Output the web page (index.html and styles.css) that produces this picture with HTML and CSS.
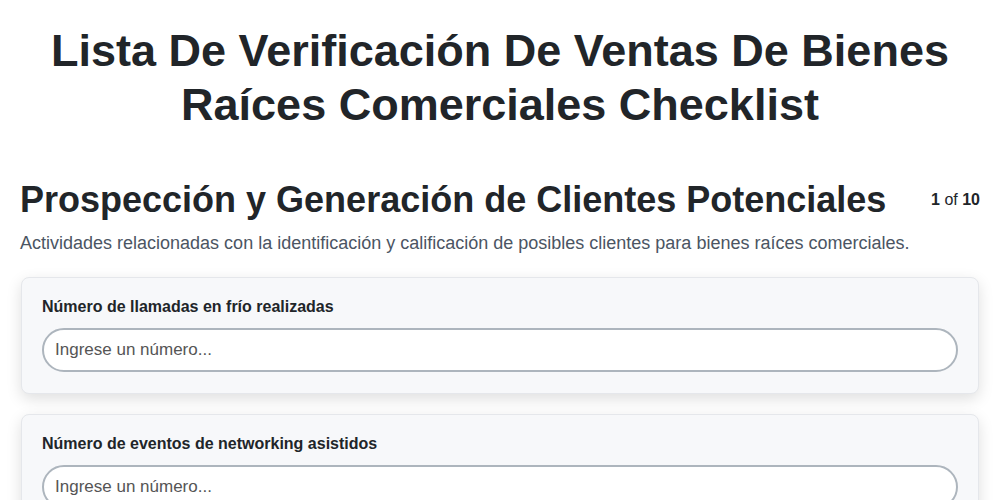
FILE: index.html
```html
<!DOCTYPE html>
<html lang="es">
<head>
<meta charset="utf-8">
<link rel="stylesheet" href="styles.css">
</head>
<body>
<div class="page">
  <h1 class="title">Lista De Verificación De Ventas De Bienes Raíces Comerciales Checklist</h1>
  <section class="section">
    <div class="section-head">
      <h2 class="section-title">Prospección y Generación de Clientes Potenciales</h2>
      <div class="pager"><b>1</b> of <b>10</b></div>
    </div>
    <p class="section-desc">Actividades relacionadas con la identificación y calificación de posibles clientes para bienes raíces comerciales.</p>
    <div class="cards">
      <div class="card">
        <label class="card-label">Número de llamadas en frío realizadas</label>
        <input class="card-input" type="text" placeholder="Ingrese un número...">
      </div>
      <div class="card">
        <label class="card-label">Número de eventos de networking asistidos</label>
        <input class="card-input" type="text" placeholder="Ingrese un número...">
      </div>
    </div>
  </section>
</div>
</body>
</html>
```
FILE: styles.css
```css
* { box-sizing: border-box; }
html, body { margin: 0; padding: 0; background: #fff; }
body {
  font-family: "Liberation Sans", Arial, sans-serif;
  color: #212529;
}
.page {
  padding: 24px 20px 0;
}
.title {
  margin: 0 auto;
  max-width: 920px;
  text-align: center;
  font-size: 45px;
  line-height: 1.2;
  font-weight: 700;
  color: #212529;
}
.section { margin-top: 44px; }
.section-head {
  display: flex;
  justify-content: space-between;
  align-items: flex-start;
}
.section-title {
  margin: 0;
  font-size: 36px;
  line-height: 48px;
  font-weight: 700;
}
.pager {
  font-size: 16px;
  padding-top: 15px;
  color: #212529;
}
.section-desc {
  margin: 9px 0 23px;
  font-size: 18px;
  color: #4b5563;
}
.cards { display: flex; flex-direction: column; gap: 20px; padding: 0 1px; }
.card {
  background: #f7f8fa;
  border: 1px solid #e5e7eb;
  border-radius: 8px;
  box-shadow: 0 5px 15px rgba(0,0,0,0.13);
  padding: 20px 20px 21px;
  display: flex;
  flex-direction: column;
}
.card-label {
  font-weight: 700;
  font-size: 16px;
  margin-bottom: 12px;
}
.card-input {
  height: 44px;
  border: 2px solid #adb5bd;
  border-radius: 22px;
  background: #fff;
  padding: 0 11px;
  font-family: "Liberation Sans", Arial, sans-serif;
  font-size: 17px;
  color: #212529;
}
.card-input::placeholder { color: #555; }
```
